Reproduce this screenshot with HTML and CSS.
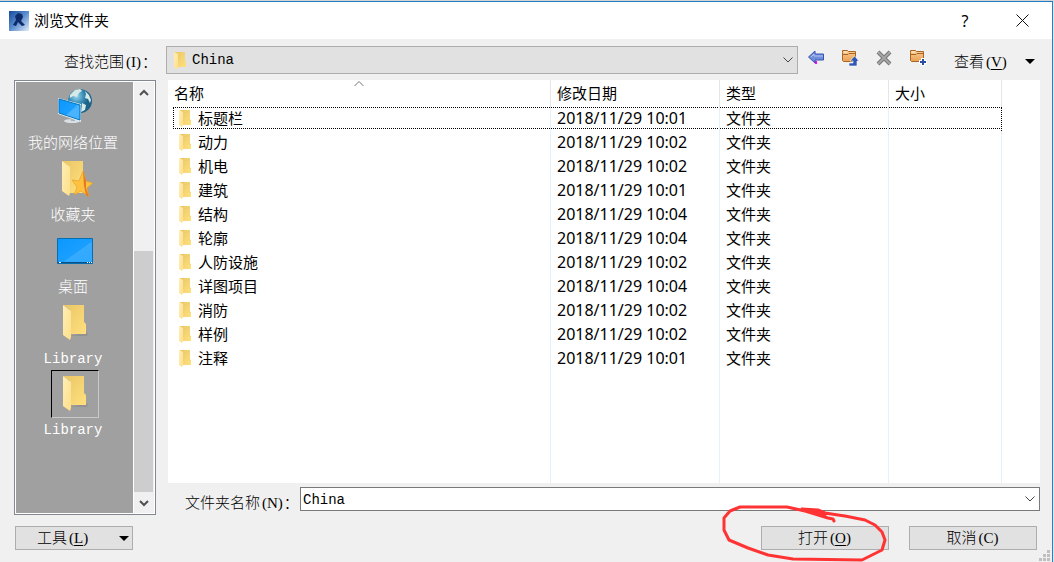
FILE: index.html
```html
<!DOCTYPE html>
<html lang="zh-CN">
<head>
<meta charset="utf-8">
<meta name="viewport" content="width=device-width, initial-scale=1">
<title>浏览文件夹</title>
<link rel="stylesheet" href="styles.css">
</head>
<body>
<svg class="defs" aria-hidden="true">
  <defs>
    <linearGradient id="gBack" x1="0" y1="0" x2="1" y2="1"><stop offset="0" stop-color="#e9c565"/><stop offset="1" stop-color="#ffe07e"/></linearGradient>
    <linearGradient id="gFlap" x1="0" y1="0" x2="1" y2="1"><stop offset="0" stop-color="#ffeeb5"/><stop offset="1" stop-color="#fddf8a"/></linearGradient>
    <linearGradient id="gScreen" x1="0" y1="0" x2="1" y2="1"><stop offset="0" stop-color="#0a98ff"/><stop offset=".55" stop-color="#1a9fff"/><stop offset=".56" stop-color="#35abff"/><stop offset="1" stop-color="#2fa8ff"/></linearGradient>
    <linearGradient id="gOrange" x1="0" y1="0" x2="0" y2="1"><stop offset="0" stop-color="#fbd09a"/><stop offset="1" stop-color="#e8a050"/></linearGradient>
    <linearGradient id="gLogo" x1="0" y1="0" x2="1" y2="1"><stop offset="0" stop-color="#164a9c"/><stop offset=".5" stop-color="#5d8ed0"/><stop offset="1" stop-color="#e3edf8"/></linearGradient>
    <radialGradient id="gGlobe" cx=".35" cy=".3"><stop offset="0" stop-color="#9bd6ee"/><stop offset=".6" stop-color="#3c8fb8"/><stop offset="1" stop-color="#1d6289"/></radialGradient>
    <symbol id="folder" viewBox="0 0 26 36">
      <path d="M9 31h16l1-3-3-1z" fill="#777" opacity=".35"/>
      <path d="M1 0h21v17l2 2v10H8V5z" fill="url(#gBack)"/>
      <path d="M1 0l8 6v26l-1 3-7-5z" fill="url(#gFlap)"/>
    </symbol>
    <symbol id="small-folder" viewBox="0 0 13 17">
      <path d="M0 0h11v9l1 1v5H3V2z" fill="url(#gBack)"/>
      <path d="M0 0l4 2v13l-1 2-3-2z" fill="url(#gFlap)"/>
    </symbol>
    <symbol id="orange-folder" viewBox="0 0 18 18">
      <path d="M1.500 3.500v-2h5l1 1h7v10h-12l-1-1z" fill="url(#gOrange)" stroke="#a86524"/>
      <path d="M2 5.500h5l1-1h6" fill="none" stroke="#a86524"/>
      <path d="M3 3h3" stroke="#fff0d4"/>
    </symbol>
  </defs>
</svg>
<div class="backdrop"></div>
<main class="dialog">
  <header class="titlebar">
    <svg class="logo" viewBox="0 0 20 20" aria-hidden="true"><path d="M0 0h20v20H0z" fill="url(#gLogo)"/><path d="M4 14l3-5-1-4 3-3 4 1 1 3-2 4 4 4-3 1-4-4-2 4z" fill="#0c2b68"/></svg>
    <h1 class="title">浏览文件夹</h1>
    <button class="caption help" aria-label="帮助">?</button>
    <button class="caption" aria-label="关闭"><svg width="13" height="13" viewBox="0 0 13 13"><path d="M.5.5l12 12M12.500.5l-12 12" stroke="#111" fill="none"/></svg></button>
  </header>

  <div class="lookup song">
    <label class="lookup-label" for="range">查找范围<span class="key">(I)</span>：</label>
    <div class="combo">
      <svg class="combo-icon" width="13" height="17" aria-hidden="true"><use href="#small-folder"/></svg>
      <select id="range" class="combo-select lat"><option>China</option></select>
      <svg class="combo-arrow" width="10" height="6" viewBox="0 0 10 6" aria-hidden="true"><path d="M.5.5L5 5 9.500.5" fill="none" stroke="#444"/></svg>
    </div>
    <nav class="tools">
      <button class="tool" aria-label="后退"><svg width="18" height="18" viewBox="0 0 18 18"><path d="M9 12v3" stroke="#f0f" stroke-width="2"/><path d="M1.500 8L8 2v3h8.500v6H8v3z" fill="#6f8dd8" stroke="#3653b4"/><path d="M4 8l3-3v2h9" fill="none" stroke="#b4c6f3"/></svg></button>
      <button class="tool" aria-label="上一级"><svg width="18" height="18" viewBox="0 0 18 18"><use href="#orange-folder" width="18" height="18"/><path d="M8 17v-3h4v-2H9l4.500-5L18 12h-2v5z" fill="#3157b5" stroke="#fff" stroke-width=".6"/></svg></button>
      <button class="tool" aria-label="删除"><svg width="18" height="18" viewBox="0 0 18 18"><path d="M3 3l12 12M15 3L3 15" stroke="#777" stroke-width="4"/><path d="M3 3l12 12M15 3L3 15" stroke="#a5a5a5" stroke-width="2"/></svg></button>
      <button class="tool" aria-label="新建文件夹"><svg width="18" height="18" viewBox="0 0 18 18"><use href="#orange-folder" width="18" height="18"/><path d="M14 9v8M10 13h8" stroke="#fff" stroke-width="4"/><path d="M14 10v6M11 13h6" stroke="#2a4da8" stroke-width="2"/></svg></button>
      <button class="view">查看<span class="key">(<u>V</u>)</span><i class="triangle"></i></button>
    </nav>
  </div>

  <div class="content">
    <aside class="places song">
      <div class="place-list">
        <button class="place"><span class="place-icon"><svg width="36" height="38" viewBox="0 0 36 38"><circle cx="23" cy="13" r="12" fill="url(#gGlobe)"/><path d="M13 7l5-5 5-1 2 2-3 2-2 4-4-1-3 2zM28 3l4 4 2 5-1 3-2-4-3-1 1-4zM25 15l4 2-1 5-4 2z" fill="#d5e9e6"/><ellipse cx="15" cy="33" rx="8" ry="2" fill="#d9dfe3"/><path d="M13 27l5 2v4h-4z" fill="#a8b3ba"/><path d="M1 10l23 6v18L1 26z" fill="#d9edf7"/><path d="M2 11l21 6v15L2 25z" fill="url(#gScreen)" stroke="#0874ba"/><path d="M22 17v14L9 27z" fill="#68c0ff" opacity=".4"/></svg></span><span class="place-name">我的网络位置</span></button>
        <button class="place"><span class="place-icon"><svg width="36" height="38" viewBox="0 0 36 38"><path d="M5 1h21v32H12V7z" fill="url(#gBack)"/><path d="M5 1l8 6v26l-1 3-7-5z" fill="url(#gFlap)"/><path d="M26 11l3 10 7 2-6 5 2 9-8-6-7 4 3-8-5-7 7 1z" fill="#ffc13f" stroke="#e39a22" stroke-width=".6"/><path d="M26 11l3 10v7l3 9-3-2-2-9z" fill="#e47b23"/></svg></span><span class="place-name">收藏夹</span></button>
        <button class="place"><span class="place-icon"><svg width="36" height="28" viewBox="0 0 36 28"><path d="M.5 1.500h35v25H.5z" fill="url(#gScreen)" stroke="#086cb0"/><path d="M1 25.500h34" stroke="#075185"/><path d="M2 25.500h2M30 25.500h1M32 25.500h1M34 25.500h1" stroke="#fff"/></svg></span><span class="place-name">桌面</span></button>
        <button class="place"><span class="place-icon"><svg width="26" height="36"><use href="#folder"/></svg></span><span class="place-name lat">Library</span></button>
        <button class="place"><span class="place-icon selected"><svg width="26" height="36"><use href="#folder"/></svg></span><span class="place-name lat">Library</span></button>
      </div>
      <div class="scrollbar">
        <button class="scroll-btn" aria-label="向上"><svg width="10" height="8" viewBox="0 0 10 8"><path d="M1 6l4-4 4 4" fill="none" stroke="#505050" stroke-width="2"/></svg></button>
        <div class="track"><div class="thumb"></div></div>
        <button class="scroll-btn" aria-label="向下"><svg width="10" height="8" viewBox="0 0 10 8"><path d="M1 2l4 4 4-4" fill="none" stroke="#505050" stroke-width="2"/></svg></button>
      </div>
    </aside>

    <section class="browser">
      <div class="list">
        <table class="files">
          <colgroup><col><col class="c-wide"><col class="c-wide"><col class="c-size"><col class="c-rest"></colgroup>
          <thead><tr><th>名称<svg class="sort" width="10" height="6" viewBox="0 0 10 6" aria-hidden="true"><path d="M.5 5L5 .5 9.500 5" fill="none" stroke="#777"/></svg></th><th>修改日期</th><th>类型</th><th>大小</th><td></td></tr></thead>
          <tbody>
            <tr class="focused"><td><span class="name"><svg width="13" height="17"><use href="#small-folder"/></svg>标题栏</span></td><td>2018/11/29 10:01</td><td>文件夹</td><td></td><td></td></tr>
            <tr><td><span class="name"><svg width="13" height="17"><use href="#small-folder"/></svg>动力</span></td><td>2018/11/29 10:02</td><td>文件夹</td><td></td><td></td></tr>
            <tr><td><span class="name"><svg width="13" height="17"><use href="#small-folder"/></svg>机电</span></td><td>2018/11/29 10:02</td><td>文件夹</td><td></td><td></td></tr>
            <tr><td><span class="name"><svg width="13" height="17"><use href="#small-folder"/></svg>建筑</span></td><td>2018/11/29 10:01</td><td>文件夹</td><td></td><td></td></tr>
            <tr><td><span class="name"><svg width="13" height="17"><use href="#small-folder"/></svg>结构</span></td><td>2018/11/29 10:04</td><td>文件夹</td><td></td><td></td></tr>
            <tr><td><span class="name"><svg width="13" height="17"><use href="#small-folder"/></svg>轮廓</span></td><td>2018/11/29 10:04</td><td>文件夹</td><td></td><td></td></tr>
            <tr><td><span class="name"><svg width="13" height="17"><use href="#small-folder"/></svg>人防设施</span></td><td>2018/11/29 10:02</td><td>文件夹</td><td></td><td></td></tr>
            <tr><td><span class="name"><svg width="13" height="17"><use href="#small-folder"/></svg>详图项目</span></td><td>2018/11/29 10:04</td><td>文件夹</td><td></td><td></td></tr>
            <tr><td><span class="name"><svg width="13" height="17"><use href="#small-folder"/></svg>消防</span></td><td>2018/11/29 10:02</td><td>文件夹</td><td></td><td></td></tr>
            <tr><td><span class="name"><svg width="13" height="17"><use href="#small-folder"/></svg>样例</span></td><td>2018/11/29 10:02</td><td>文件夹</td><td></td><td></td></tr>
            <tr><td><span class="name"><svg width="13" height="17"><use href="#small-folder"/></svg>注释</span></td><td>2018/11/29 10:01</td><td>文件夹</td><td></td><td></td></tr>
            <tr class="filler" aria-hidden="true"><td></td><td></td><td></td><td></td><td></td></tr>
          </tbody>
        </table>
      </div>
      <div class="filename song">
        <label class="filename-label" for="fname">文件夹名称<span class="key">(N)</span>：</label>
        <div class="field">
          <input id="fname" class="field-input lat" type="text" value="China">
          <button class="field-arrow" aria-label="展开"><svg width="10" height="6" viewBox="0 0 10 6"><path d="M.5.5L5 5 9.500.5" fill="none" stroke="#444"/></svg></button>
        </div>
      </div>
    </section>
  </div>

  <footer class="footer song">
    <button class="btn btn-tools">工具<span class="key">(<u>L</u>)</span><i class="triangle"></i></button>
    <div class="marked">
      <button class="btn">打开<span class="key">(<u>O</u>)</span></button>
      <svg class="scribble" width="170" height="59" viewBox="0 0 170 59" aria-hidden="true"><path d="M113 18L112 16 107 15 94 11 84 8 66 4H19L9 8 3 15V27L8 37 27 45 47 52 72 56 141 57 149 53 161 47 164 37 161 29 154 22 144 17 124 13 117 12 104 10 97 7 81 6 92 9 104 12" fill="none" stroke="#ff3333" stroke-width="3" stroke-linejoin="round" stroke-linecap="round"/></svg>
    </div>
    <button class="btn">取消<span class="key">(C)</span></button>
  </footer>
  <svg class="grip" width="12" height="12" viewBox="0 0 12 12" aria-hidden="true"><path d="M8 0h3v3H8zM4 4h3v3H4zM8 4h3v3H8zM0 8h3v3H0zM4 8h3v3H4zM8 8h3v3H8z" fill="#bfbfbf"/></svg>
</main>
</body>
</html>
```
FILE: styles.css
```css
* { box-sizing: border-box; }

body {
  margin: 0;
  min-height: 100vh;
  display: flex;
  flex-direction: column;
  background: #e6e6e6;
  color: #000;
  font-family: "Noto Sans", "Noto Sans CJK SC", sans-serif;
  font-size: 15px;
}

button {
  border: 0;
  padding: 0;
  background: none;
  color: inherit;
  font: inherit;
}

svg { display: block; flex: none; }
.defs { position: absolute; width: 0; height: 0; }

.song {
  font-family: "Liberation Serif", "Noto Sans CJK SC", serif;
  font-weight: 300;
  line-height: 24px;
}
.lat { font-family: "Liberation Mono", monospace; font-size: 14px; }
.key { margin: 0 1px 0 2px; font-size: 15px; }
.key u { text-underline-offset: 2px; }

.backdrop { height: 1px; background: #d4d4d4; }

.dialog {
  position: relative;
  flex: 1;
  display: flex;
  flex-direction: column;
  margin-right: 1px;
  border-top: 1px solid #1e7bc4;
  border-right: 1px solid #1a82d8;
  background: #f0f0f0;
}

.titlebar {
  display: flex;
  align-items: center;
  height: 37px;
  padding-left: 9px;
  background: #fff;
}
.logo { width: 20px; height: 20px; }
.title { flex: 1; margin: 0 0 2px 5px; font-size: 15px; font-weight: 400; }
.caption { display: flex; align-items: center; justify-content: center; width: 60px; height: 36px; }
.help { width: 54px; font-size: 16px; }

.lookup { display: flex; align-items: center; height: 41px; padding: 0 12px 0 14px; }
.lookup-label { width: 152px; padding: 4px 0 0 50px; white-space: nowrap; }
.combo { position: relative; flex: 1; height: 28px; }
.combo-select {
  appearance: none;
  width: 100%;
  height: 28px;
  padding: 0 24px 0 25px;
  border: 1px solid #adadad;
  border-radius: 0;
  background: #e1e1e1;
  color: #000;
}
.combo-icon { position: absolute; left: 8px; top: 6px; }
.combo-arrow { position: absolute; right: 5px; top: 11px; }
.tools { display: flex; align-items: center; width: 242px; padding-left: 1px; }
.tool { display: flex; justify-content: center; width: 34px; height: 24px; padding-top: 1px; }
.view { flex: 1; display: flex; align-items: center; padding: 4px 0 0 19px; }
.triangle {
  margin-left: auto;
  border: 5px solid transparent;
  border-top-color: #000;
  border-bottom: 0;
}
.view .triangle { margin-right: 5px; }

.content { flex: 1; display: flex; gap: 12px; padding: 0 12px 0 14px; }

.places {
  display: flex;
  width: 142px;
  padding: 1px;
  border: 1px solid #828790;
  background: #fff;
}
.place-list { flex: 1; background: #a0a0a0; }
.place { display: flex; flex-direction: column; align-items: center; width: 100%; color: #fff; }
.place-icon { display: flex; align-items: center; justify-content: center; width: 48px; height: 49px; }
.selected { height: 48px; border: 1px solid; border-color: #000 #c8c8c8 #c8c8c8 #000; }
.place-name { height: 23px; margin-right: 3px; white-space: nowrap; }
.scrollbar { display: flex; flex-direction: column; width: 21px; padding-right: 1px; background: #f0f0f0; border-left: 1px solid #fff; }
.scroll-btn { display: flex; align-items: center; justify-content: center; height: 21px; }
.track { flex: 1; display: flex; align-items: flex-end; }
.thumb { width: 100%; height: 62%; background: #cdcdcd; }

.browser { flex: 1; display: flex; flex-direction: column; }
.list { flex: 1; display: flex; background: #fff; }
.files { flex: 1; table-layout: fixed; border-collapse: separate; border-spacing: 0; }
.c-wide { width: 169px; }
.c-size { width: 113px; }
.c-rest { width: 38px; }
.files th, .files td {
  height: 24px;
  padding: 0 6px 2px;
  border-right: 1px solid #e5f0fb;
  text-align: left;
  font-weight: 400;
  line-height: 20px;
  white-space: nowrap;
}
.files thead th, .files thead td { position: relative; height: 27px; border-color: #e5e5e5; }
.files tr > :last-child { border-right: 0; }
.files td:nth-child(2) { font-size: 16px; }
.files .filler td { height: auto; }
.sort { position: absolute; left: 186px; top: 1px; }
.name { display: flex; align-items: center; gap: 6px; padding-left: 5px; }
.focused td:not(:last-child) {
  background-image: linear-gradient(90deg, #000 50%, transparent 50%), linear-gradient(90deg, #000 50%, transparent 50%);
  background-size: 2px 1px;
  background-repeat: repeat-x;
  background-position: 0 0, 0 21px;
}
.focused td:first-child { background-origin: content-box; background-clip: content-box; padding: 0 0 0 5px; }
.focused .name { margin-bottom: 2px; height: 22px; border-left: 1px dotted #000; }
.focused td:nth-child(4) { border-right: 1px dotted #000; }

.filename { display: flex; align-items: center; height: 32px; }
.filename-label { width: 132px; padding: 8px 0 0 17px; white-space: nowrap; }
.field { flex: 1; display: flex; height: 24px; border: 1px solid #7a7a7a; background: #fff; }
.field-input { flex: 1; min-width: 0; border: 0; padding: 2px 2px 0; background: none; }
.field-arrow { display: flex; align-items: center; justify-content: center; width: 19px; }

.footer { display: flex; gap: 20px; padding: 11px 15px 12px 15px; }
.btn {
  display: flex;
  align-items: center;
  justify-content: center;
  width: 128px;
  height: 24px;
  border: 1px solid #adadad;
  background: #e1e1e1;
}
.btn-tools { width: 118px; margin-right: auto; padding: 0 3px 0 21px; }
.marked { position: relative; }
.scribble { position: absolute; left: -40px; top: -23px; pointer-events: none; }
.grip { position: absolute; right: 1px; bottom: 0; }
```
